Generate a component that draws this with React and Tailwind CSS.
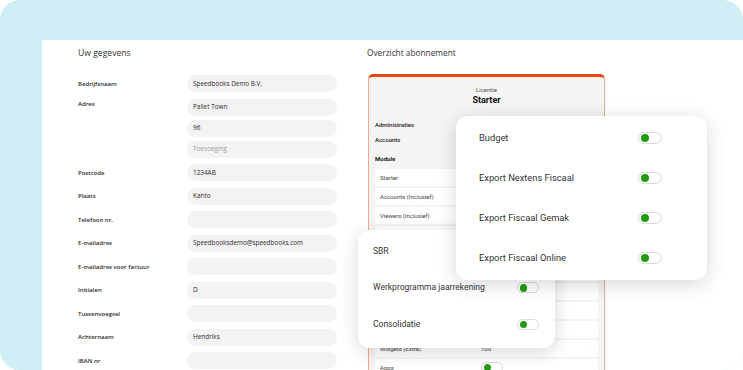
const fields = [
  { label: 'Bedrijfsnaam', values: ['Speedbooks Demo B.V.'] },
  { label: 'Adres', values: ['Pallet Town', '96', ''], placeholders: ['', '', 'Toevoeging'] },
  { label: 'Postcode', values: ['1234AB'] },
  { label: 'Plaats', values: ['Kanto'] },
  { label: 'Telefoon nr.', values: [''] },
  { label: 'E-mailadres', values: ['Speedbooksdemo@speedbooks.com'] },
  { label: 'E-mailadres voor factuur', values: [''] },
  { label: 'Initialen', values: ['D'] },
  { label: 'Tussenvoegsel', values: [''] },
  { label: 'Achternaam', values: ['Hendriks'] },
  { label: 'IBAN nr', values: [''] },
]

// rows 4-9 sit under the popups, so they stay empty
const moduleRows = [
  { id: 'starter', label: 'Starter', value: '' },
  { id: 'accounts', label: 'Accounts (Inclusief)', value: '' },
  { id: 'viewers', label: 'Viewers (Inclusief)', value: '' },
  { id: 'r4', label: '', value: '' },
  { id: 'r5', label: '', value: '' },
  { id: 'r6', label: '', value: '' },
  { id: 'r7', label: '', value: '' },
  { id: 'r8', label: '', value: '' },
  { id: 'r9', label: '', value: '' },
  { id: 'widgets', label: 'Widgets (Extra)', value: '100', price: '-' },
  { id: 'apps', label: 'Apps', value: '', toggle: true },
]

const Toggle = ({ small }) => (
  <span
    className={`flex shrink-0 items-center rounded-full border border-[#d9d9d9] bg-white pl-[1.5px] ${
      small ? 'h-[11px] w-[22px]' : 'h-[12px] w-[24px]'
    }`}
  >
    <span className={`rounded-full bg-[#1f9d10] ${small ? 'h-[7.5px] w-[7.5px]' : 'h-[8px] w-[8px]'}`} />
  </span>
)

const FieldRow = ({ field }) => (
  <div className="flex">
    <div
      className={`w-[109px] shrink-0 text-[6px] font-semibold leading-[8px] text-[#2b2b2b] ${
        field.values.length > 1 ? 'pt-[1px]' : 'self-center'
      }`}
    >
      {field.label}
    </div>
    <div className="flex flex-col gap-[4px]">
      {field.values.map((value, i) => (
        <div
          key={i}
          className="flex h-[17px] w-[150px] items-center rounded-full bg-[#f3f3f3] px-[6px] text-[6.4px] text-[#2b2b2b]"
        >
          {value || <span className="text-[#9a9a9a]">{field.placeholders?.[i]}</span>}
        </div>
      ))}
    </div>
  </div>
)

const App = () => {
  return (
    <div className="h-[370px] w-[743px] bg-white font-['Open_Sans',sans-serif]">
      <div className="relative h-full w-full overflow-hidden rounded-[20px] bg-[#cfeef5] pl-[42px] pt-[40px]">
        <div className="flex h-full bg-white">
          <section className="w-[295px] shrink-0 pl-[36px] pt-[7px]">
            <h2 className="text-[8.6px] leading-[12px] text-[#333]">Uw gegevens</h2>
            <div className="mt-[16px] flex flex-col gap-[6.5px]">
              {fields.map((field) => (
                <FieldRow key={field.label} field={field} />
              ))}
            </div>
          </section>

          <section className="ml-[30px] pt-[7px]">
            <h2 className="text-[8.3px] leading-[12px] text-[#333]">Overzicht abonnement</h2>
            <div className="ml-[1px] mt-[15px] w-[237px] rounded-t-[5px] border border-t-[3px] border-[#f4a88c] border-t-[#e8490f] bg-[#f4f4f4] px-[6px] pb-[20px] pt-[9px] font-['Roboto',sans-serif]">
              <div className="text-center text-[6px] leading-[8px] text-[#555]">Licentie</div>
              <div className="text-center text-[9px] font-bold leading-[12px] text-[#111]">Starter</div>
              <div className="mt-[15px] text-[6px] font-medium leading-[8px] text-[#222]">Administraties</div>
              <div className="mt-[7px] text-[6px] font-medium leading-[8px] text-[#222]">Accounts</div>
              <div className="mt-[11px] text-[6px] font-bold leading-[8px] text-[#222]">Module</div>
              <div className="mt-[6px] flex flex-col gap-[2px]">
                {moduleRows.map((row) => (
                  <div
                    key={row.id}
                    className="flex h-[17px] items-center rounded-[3px] bg-white pl-[5px] pr-[10px] text-[6px] text-[#444]"
                  >
                    <span className="w-[101px] shrink-0">{row.label}</span>
                    <span className="flex-1">{row.toggle ? <Toggle small /> : row.value}</span>
                    <span className="text-[#bbb]">{row.price}</span>
                  </div>
                ))}
              </div>
            </div>
          </section>
        </div>

        <div className="absolute left-[358px] top-[230px] z-10 h-[118px] w-[197px] rounded-[12px] bg-white pl-[15px] pt-[3px] font-['Roboto',sans-serif] shadow-[0_4px_18px_rgba(0,0,0,0.16)]">
          {['SBR', 'Werkprogramma jaarrekening', 'Consolidatie'].map((item) => (
            <div key={item} className="flex h-[36.5px] items-center text-[8.5px] text-[#333]">
              <span className="w-[144px] shrink-0">{item}</span>
              <Toggle small />
            </div>
          ))}
        </div>

        <div className="absolute left-[456px] top-[116px] z-20 h-[164px] w-[251px] rounded-[12px] bg-white pl-[23px] pt-[2px] font-['Roboto',sans-serif] shadow-[0_4px_20px_rgba(0,0,0,0.16)]">
          {['Budget', 'Export Nextens Fiscaal', 'Export Fiscaal Gemak', 'Export Fiscaal Online'].map((item) => (
            <div key={item} className="flex h-[40px] items-center text-[9.3px] text-[#333]">
              <span className="w-[159px] shrink-0">{item}</span>
              <Toggle />
            </div>
          ))}
        </div>
      </div>
    </div>
  )
}

export default App
